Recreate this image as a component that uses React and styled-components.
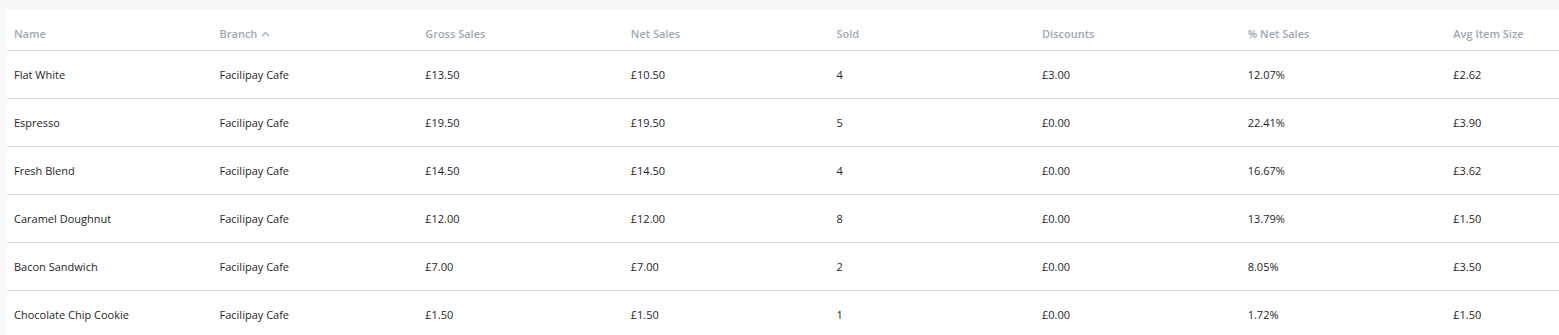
import styled, { createGlobalStyle } from "styled-components";

const GlobalStyle = createGlobalStyle`
  body {
    margin: 0;
    background: #f7f8fa;
    font-family: "Open Sans", "Liberation Sans", sans-serif;
    overflow: hidden;
  }
`;

const Page = styled.div`
  padding: 11px 0 0 7px;
  width: 1552px;
  overflow: hidden;
`;

const Card = styled.div`
  background: #ffffff;
  width: 1660px;
`;

const Table = styled.table`
  border-collapse: collapse;
  table-layout: fixed;
  width: 1652px;
`;

const HeadCell = styled.th`
  text-align: left;
  font-size: 11px;
  font-weight: 600;
  color: #9ea8b3;
  line-height: 16px;
  padding: 15px 0 8px ${({ $first }) => ($first ? "7px" : "0")};
  width: ${({ $first }) => ($first ? "205.5px" : "205.6px")};
  border-bottom: 1px solid #dcdcdc;
  white-space: nowrap;
`;

const Row = styled.tr`
  border-bottom: 1px solid #dcdcdc;
`;

const Cell = styled.td`
  font-size: 11px;
  color: #1e1e1e;
  line-height: 16px;
  height: 48px;
  padding: 1px 0 0 ${({ $first }) => ($first ? "7px" : "0")};
  white-space: nowrap;
  box-sizing: border-box;
`;

const SortIcon = styled.svg`
  margin-left: 4px;
  vertical-align: middle;
  position: relative;
  top: -1px;
`;

const columns = [
  "Name",
  "Branch",
  "Gross Sales",
  "Net Sales",
  "Sold",
  "Discounts",
  "% Net Sales",
  "Avg Item Size",
];

const rows = [
  ["Flat White", "Facilipay Cafe", "£13.50", "£10.50", "4", "£3.00", "12.07%", "£2.62"],
  ["Espresso", "Facilipay Cafe", "£19.50", "£19.50", "5", "£0.00", "22.41%", "£3.90"],
  ["Fresh Blend", "Facilipay Cafe", "£14.50", "£14.50", "4", "£0.00", "16.67%", "£3.62"],
  ["Caramel Doughnut", "Facilipay Cafe", "£12.00", "£12.00", "8", "£0.00", "13.79%", "£1.50"],
  ["Bacon Sandwich", "Facilipay Cafe", "£7.00", "£7.00", "2", "£0.00", "8.05%", "£3.50"],
  ["Chocolate Chip Cookie", "Facilipay Cafe", "£1.50", "£1.50", "1", "£0.00", "1.72%", "£1.50"],
];

const App = () => (
  <>
    <GlobalStyle />
    <Page>
      <Card>
        <Table>
          <thead>
            <tr>
              {columns.map((c, i) => (
                <HeadCell key={c} $first={i === 0}>
                  {c}
                  {c === "Branch" && (
                    <SortIcon width="9" height="6" viewBox="0 0 9 6">
                      <path d="M1 5 L4.5 1.5 L8 5" fill="none" stroke="#9ea8b3" strokeWidth="1.2" />
                    </SortIcon>
                  )}
                </HeadCell>
              ))}
            </tr>
          </thead>
          <tbody>
            {rows.map((r) => (
              <Row key={r[0]}>
                {r.map((v, i) => (
                  <Cell key={i} $first={i === 0}>{v}</Cell>
                ))}
              </Row>
            ))}
          </tbody>
        </Table>
      </Card>
    </Page>
  </>
);

export default App;
